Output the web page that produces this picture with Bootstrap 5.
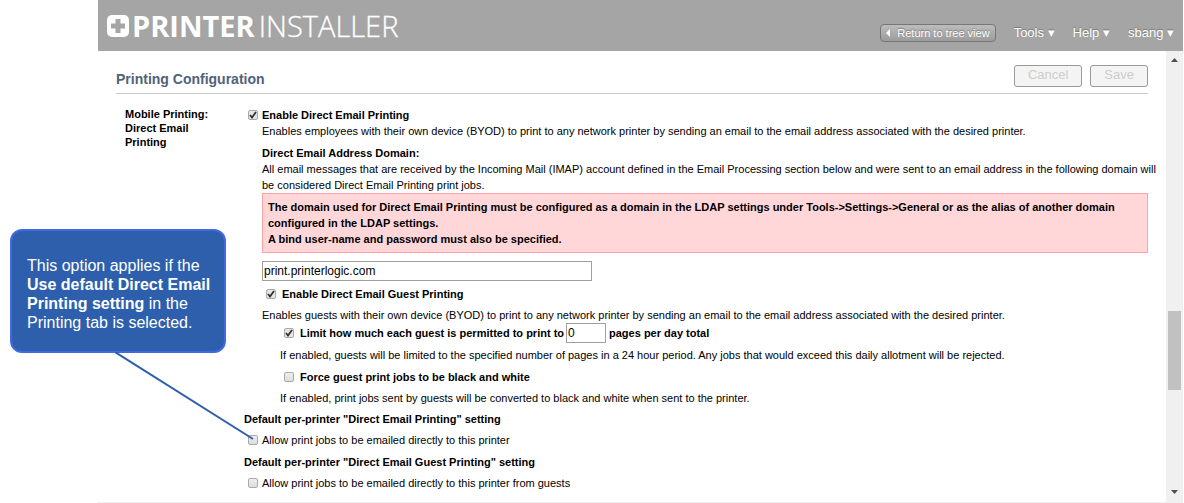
<!DOCTYPE html>
<html lang="en">
<head>
<meta charset="utf-8">
<meta name="viewport" content="width=device-width, initial-scale=1">
<title>Printer Installer - Printing Configuration</title>
<link rel="stylesheet" href="https://cdn.jsdelivr.net/npm/bootstrap@5.3.0/dist/css/bootstrap.min.css">
<style>
body{font-family:"Liberation Sans",Arial,sans-serif;font-size:11px;line-height:16px;color:#000;background:#fff}
.shell{margin-left:98px;margin-right:1px;border-bottom:1px solid #f0f0f0}
.topbar{height:51px;background:#a5a5a5;padding:0 9px 0 8px}
.brand{font-family:"Open Sans",sans-serif;font-size:29px;line-height:52px;font-weight:400;color:#fff;text-decoration:none}
.brand svg{margin-right:2px}
.brand span{font-weight:300;-webkit-text-stroke:.3px #fff}
.brand strong{font-weight:700;margin-right:4px}
.topmenu{font-size:13px;text-shadow:0 -1px 1px #777;gap:18px;padding-top:14px}
.topmenu a{color:#fff;text-decoration:none}
.btn-tree{font-size:11px;line-height:16px;padding:0 5px;color:#fff;border:1px solid #767676;border-radius:4px;background:linear-gradient(#bdbdbd,#9b9b9b);text-shadow:0 -1px 1px #777;gap:7px}
.panel{padding:14px 18px 11px}
.panel-head{border-bottom:1px solid #c8c8c8;height:29px}
.panel-head h1{font-size:14px;line-height:28px;font-weight:700;color:#50627a}
.btn-form{height:22px;font-size:13px;line-height:16px;padding:0 13px 2px;color:#ccc;border:1px solid #999;border-radius:3px;background:#f4f4f4}
.btn-form:disabled{color:#ccc;border-color:#999;background:#f4f4f4;opacity:1}
.section-name{width:128px;padding:13px 20px 0 9px;font-size:11px;line-height:14px;font-weight:700}
.fields{padding-top:13px}
.line{margin-bottom:5px}
.line-last{margin-bottom:6px}
.tick{appearance:none;flex:none;width:10px;height:10px;margin:0 4px;border:1px solid #aaa;border-radius:2px;background:linear-gradient(#eee,#ddd)}
.tick:checked{background:url("data:image/svg+xml,%3Csvg xmlns='http://www.w3.org/2000/svg' viewBox='0 0 8 8'%3E%3Cpath d='M1 4l2 2.5L7 1' fill='none' stroke='%23333' stroke-width='1.8'/%3E%3C/svg%3E") #e6e6e6}
.tick-wide{margin-right:6px}
.indent{padding-left:18px}
.wide-text{margin:0 -14px 0 0}
.warn{border:1px solid #ffa3a6;background:#ffd7d9;padding:5px;font-weight:700}
.box{border:1px solid #a0a0a0;height:20px;padding:0 1px;font-size:12px;color:#000;background:#fff}
.box-domain{width:330px;max-width:100%;margin-bottom:5px}
.box-pages{width:40px;margin:0 3px 0 2px}
.scroller{width:17px;background:#f0f0f0;padding:7px 2px 8px}
.track-above{flex:5 0 0}
.track-below{flex:2 0 0}
.thumb{width:13px;height:79px;background:#c1c1c1}
.callout{left:10px;top:229px;width:216px;padding:25px 8px 19px 15px;border:2px solid #4169e1;border-radius:12px;background:#2e5fac;color:#fff;font-size:16px;line-height:19px}
.leader{left:115px;top:352px}
</style>
</head>
<body>
<div class="shell">
  <header class="topbar d-flex justify-content-between">
    <a href="#" class="brand d-flex align-items-center">
      <svg width="24" height="22" viewBox="0 0 24 22" aria-hidden="true"><rect x="1" width="22" height="22" rx="5" fill="#fff"/><path d="M9.500 4h5v4.500h4.500v5h-4.500v4.500h-5v-4.500H5v-5h4.500z" fill="#a5a5a5"/></svg>
      <strong>PRINTER</strong><span>INSTALLER</span>
    </a>
    <nav class="topmenu d-flex align-items-center">
      <button type="button" class="btn-tree d-flex align-items-center"><svg width="4" height="8" viewBox="0 0 4 8" aria-hidden="true"><path d="M4 0v8L0 4z" fill="#fff"/></svg>Return to tree view</button>
      <a href="#">Tools ▾</a>
      <a href="#">Help ▾</a>
      <a href="#">sbang ▾</a>
    </nav>
  </header>
  <div class="d-flex">
    <main class="panel flex-grow-1">
      <div class="panel-head d-flex justify-content-between">
        <h1 class="m-0">Printing Configuration</h1>
        <div class="d-flex gap-2"><button type="button" class="btn-form" disabled>Cancel</button><button type="button" class="btn-form" disabled>Save</button></div>
      </div>
      <div class="d-flex">
        <div class="section-name flex-shrink-0">Mobile Printing: Direct Email Printing</div>
        <form class="fields flex-grow-1">
          <div class="d-flex align-items-center fw-bold"><input class="tick" type="checkbox" id="direct" checked><label for="direct">Enable Direct Email Printing</label></div>
          <div class="indent">
            <p class="line-last">Enables employees with their own device (BYOD) to print to any network printer by sending an email to the email address associated with the desired printer.</p>
            <label for="domain" class="d-block fw-bold">Direct Email Address Domain:</label>
            <p class="wide-text">All email messages that are received by the Incoming Mail (IMAP) account defined in the Email Processing section below and were sent to an email address in the following domain will be considered Direct Email Printing print jobs.</p>
            <div class="warn mb-2" role="alert">The domain used for Direct Email Printing must be configured as a domain in the LDAP settings under Tools-&gt;Settings-&gt;General or as the alias of another domain configured in the LDAP settings.<br>A bind user-name and password must also be specified.</div>
            <input class="box box-domain d-block" id="domain" type="text" value="print.printerlogic.com">
            <div class="line d-flex align-items-center fw-bold"><input class="tick tick-wide" type="checkbox" id="guest" checked><label for="guest">Enable Direct Email Guest Printing</label></div>
            <p class="m-0">Enables guests with their own device (BYOD) to print to any network printer by sending an email to the email address associated with the desired printer.</p>
            <div class="indent">
              <div class="d-flex align-items-center fw-bold mb-1"><input class="tick tick-wide" type="checkbox" id="limit" checked><label for="limit">Limit how much each guest is permitted to print to</label><input class="box box-pages" type="text" value="0" aria-label="Pages per day"><span>pages per day total</span></div>
              <p class="line-last">If enabled, guests will be limited to the specified number of pages in a 24 hour period. Any jobs that would exceed this daily allotment will be rejected.</p>
              <div class="line d-flex align-items-center fw-bold"><input class="tick tick-wide" type="checkbox" id="bw"><label for="bw">Force guest print jobs to be black and white</label></div>
              <p class="line">If enabled, print jobs sent by guests will be converted to black and white when sent to the printer.</p>
            </div>
          </div>
          <div class="line fw-bold">Default per-printer "Direct Email Printing" setting</div>
          <div class="line-last d-flex align-items-center"><input class="tick" type="checkbox" id="allow"><label for="allow">Allow print jobs to be emailed directly to this printer</label></div>
          <div class="line fw-bold">Default per-printer "Direct Email Guest Printing" setting</div>
          <div class="d-flex align-items-center"><input class="tick" type="checkbox" id="allowguest"><label for="allowguest">Allow print jobs to be emailed directly to this printer from guests</label></div>
        </form>
      </div>
    </main>
    <div class="scroller flex-shrink-0 d-flex flex-column align-items-center" aria-hidden="true">
      <svg width="7" height="4" viewBox="0 0 7 4"><path d="M0 4L3.500 0L7 4z" fill="#505050"/></svg>
      <div class="track-above"></div>
      <div class="thumb"></div>
      <div class="track-below"></div>
      <svg width="7" height="4" viewBox="0 0 7 4"><path d="M0 0L3.500 4L7 0z" fill="#505050"/></svg>
    </div>
  </div>
</div>
<aside class="callout position-absolute">This option applies if the <b>Use default Direct Email Printing setting</b> in the Printing tab is selected.</aside>
<svg class="leader position-absolute pe-none" width="140" height="89" viewBox="0 0 140 89" aria-hidden="true"><path d="M0 0L138 87" stroke="#2e5fac" stroke-width="2"/></svg>
<script src="https://cdn.jsdelivr.net/npm/bootstrap@5.3.0/dist/js/bootstrap.bundle.min.js"></script>
</body>
</html>
